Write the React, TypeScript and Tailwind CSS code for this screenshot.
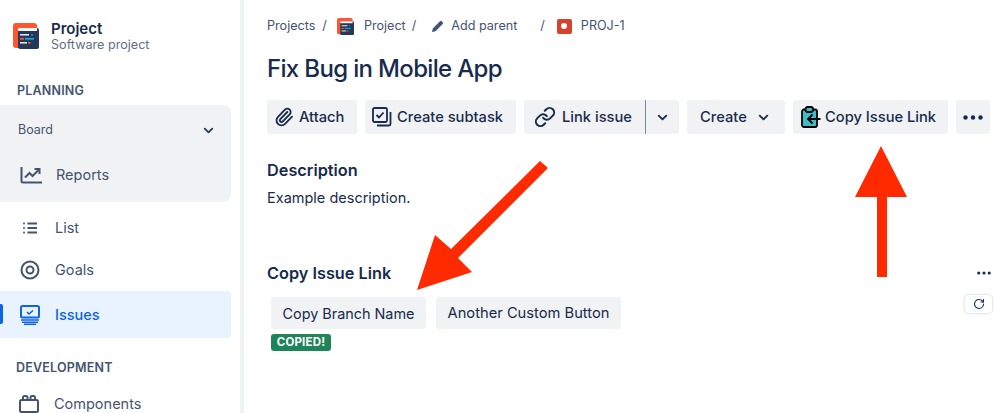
import { ReactNode } from 'react';
import { ChevronDown, Link, Paperclip, RotateCw } from 'lucide-react';

function ProjectLogo({ size }: { size: number }) {
  return (
    <svg width={size} height={size} viewBox="0 0 26 26">
      <rect x="0" y="0" width="24" height="25" rx="3" fill="#ff5630" />
      <rect x="5" y="5" width="21" height="21" rx="2" fill="#253858" />
      <rect x="5" y="5" width="19" height="3" fill="#f4f5f7" />
      <rect x="7" y="11" width="9" height="1.6" fill="#dfe1e6" />
      <rect x="18" y="11" width="2" height="1.6" fill="#2684ff" />
      <rect x="7" y="15" width="4" height="1.6" fill="#ff5630" />
      <rect x="12" y="15" width="9" height="1.6" fill="#00b8d9" />
      <rect x="7" y="19" width="7" height="1.6" fill="#dfe1e6" />
      <rect x="15" y="19" width="2.5" height="1.6" fill="#ff5630" />
    </svg>
  );
}

function TrendIcon() {
  return (
    <svg width="22" height="18" viewBox="0 0 22 18" fill="none" stroke="#44546f" strokeWidth="2">
      <path d="M1.5 1v14a1.5 1.5 0 0 0 1.5 1.5h19" />
      <path d="M5 11.5l4.5-4.5 3 3L19 3.5" />
      <path d="M14.5 3H19.5V8" />
    </svg>
  );
}

function ListIcon() {
  return (
    <svg width="14" height="12" viewBox="0 0 14 12" fill="#44546f">
      <rect x="0" y="0.5" width="2" height="2" rx="1" />
      <rect x="0" y="5" width="2" height="2" rx="1" />
      <rect x="0" y="9.5" width="2" height="2" rx="1" />
      <rect x="4.5" y="0.5" width="9.5" height="2" />
      <rect x="4.5" y="5" width="9.5" height="2" />
      <rect x="4.5" y="9.5" width="9.5" height="2" />
    </svg>
  );
}

function GoalsIcon() {
  return (
    <svg width="20" height="20" viewBox="0 0 20 20" fill="none" stroke="#44546f" strokeWidth="2">
      <circle cx="10" cy="10" r="8.5" />
      <circle cx="10" cy="10" r="3.5" />
    </svg>
  );
}

function IssuesIcon() {
  return (
    <svg width="20" height="20" viewBox="0 0 20 20" fill="none">
      <rect x="1" y="1" width="18" height="11.5" rx="1.5" stroke="#0c66e4" strokeWidth="2" />
      <path d="M7 7l2 2 4-3.5" stroke="#0c66e4" strokeWidth="1.6" />
      <path d="M1 15h18M2 17.2h16M4 19.2h12" stroke="#0c66e4" strokeWidth="1.4" />
    </svg>
  );
}

function ComponentsIcon() {
  return (
    <svg width="20" height="18" viewBox="0 0 20 18" fill="none" stroke="#44546f" strokeWidth="2">
      <rect x="1" y="5" width="18" height="12" rx="1.5" />
      <path d="M4 5V2.5A1.5 1.5 0 0 1 5.5 1H7a1.5 1.5 0 0 1 1.5 1.5V5M11.5 5V2.5A1.5 1.5 0 0 1 13 1h1.5A1.5 1.5 0 0 1 16 2.5V5" />
    </svg>
  );
}

function SubtaskIcon() {
  return (
    <svg width="20" height="20" viewBox="0 0 20 20" fill="none" stroke="#172b4d" strokeWidth="1.8">
      <rect x="1" y="1" width="14" height="14" rx="1.5" />
      <path d="M4.5 8l2.5 2.5 4.5-5" />
      <path d="M18.5 5v12a1.5 1.5 0 0 1-1.5 1.5H5" />
    </svg>
  );
}

function ClipboardIcon() {
  return (
    <svg width="20" height="22" viewBox="0 0 20 22" fill="none">
      <rect x="1" y="3.5" width="15" height="17.5" rx="2" fill="#3dbecb" stroke="#000" strokeWidth="1.8" />
      <rect x="4.5" y="1" width="7.5" height="5" rx="2" fill="#3dbecb" stroke="#000" strokeWidth="1.8" />
      <path d="M19.5 13H7.5M11.5 8.5L7 13l4.5 4.5" stroke="#000" strokeWidth="1.8" />
    </svg>
  );
}

function Dots({ big }: { big?: boolean }) {
  return (
    <svg width={big ? 20 : 14} height={big ? 5 : 4} viewBox="0 0 20 5" fill="#172b4d">
      <circle cx="2.5" cy="2.5" r="2.2" />
      <circle cx="10" cy="2.5" r="2.2" />
      <circle cx="17.5" cy="2.5" r="2.2" />
    </svg>
  );
}

function ActionButton({ children, className = '' }: { children: ReactNode; className?: string }) {
  return (
    <div className={`flex h-[34px] items-center rounded-[3px] bg-[#f1f2f4] text-[14.7px] font-medium text-[#172b4d] ${className}`}>
      {children}
    </div>
  );
}

function NavRow({ icon, label, className = '' }: { icon: ReactNode; label: string; className?: string }) {
  return (
    <div className={`flex items-center text-[14.5px] text-[#44546f] ${className}`}>
      <span className="flex w-[55px] shrink-0 items-center justify-center pl-[5px]">{icon}</span>
      <span>{label}</span>
    </div>
  );
}

export default function App() {
  return (
    <div className="relative flex h-[413px] w-[999px] overflow-hidden bg-white font-['Inter',sans-serif] text-[#172b4d]">
      {/* Sidebar */}
      <aside className="w-[244px] shrink-0 border-r-[4px] border-[#f1f2f4]">
        <div className="flex h-[73px] items-start pl-[13px] pt-[23px]">
          <ProjectLogo size={26} />
          <div className="ml-[12px] mt-[-3px]">
            <div className="text-[15px] leading-[18px] font-semibold">Project</div>
            <div className="text-[12.6px] leading-[13px] text-[#626f86]">Software project</div>
          </div>
        </div>
        <div className="pl-[17px] pt-[9px] text-[12.5px] leading-[18px] font-semibold tracking-[0.2px] text-[#44546f]">PLANNING</div>
        <div className="mt-[5px] h-[97px] w-[231px] rounded-r-[8px] bg-[#f1f2f4]">
          <div className="flex h-[50px] items-center justify-between pl-[18px] pr-[15px] pt-[1px] text-[12.5px] text-[#44546f]">
            Board
            <ChevronDown size={15} strokeWidth={3} className="text-[#2c3e5d]" />
          </div>
          <NavRow icon={<TrendIcon />} label="Reports" className="h-[40px] [&>span:first-child]:w-[56px]" />
        </div>
        <NavRow icon={<ListIcon />} label="List" className="mt-[6px] h-[40px]" />
        <NavRow icon={<GoalsIcon />} label="Goals" className="h-[43px]" />
        <div className="relative flex h-[47px] w-[231px] items-center rounded-r-[4px] bg-[#e9f2ff] text-[14.5px] font-medium text-[#0c66e4]">
          <span className="absolute left-0 top-[13px] h-[20px] w-[3px] rounded-r-[2px] bg-[#0c66e4]" />
          <span className="flex w-[55px] shrink-0 items-center justify-center pl-[5px]">
            <IssuesIcon />
          </span>
          Issues
        </div>
        <div className="pl-[16px] pt-[21px] text-[12.5px] leading-[18px] font-semibold tracking-[0.2px] text-[#44546f]">DEVELOPMENT</div>
        <div className="mt-[16px] flex items-center text-[14.5px] text-[#44546f]">
          <span className="flex w-[54px] shrink-0 items-center justify-center pl-[4px]">
            <ComponentsIcon />
          </span>
          Components
        </div>
      </aside>

      {/* Issue view */}
      <main className="min-w-0 flex-1 pl-[23px] pr-[9px]">
        <div className="mt-[16px] flex h-[20px] items-center text-[12.6px] text-[#44546f]">
          <span>Projects</span>
          <span className="ml-[7px]">/</span>
          <span className="ml-[10px]"><ProjectLogo size={17} /></span>
          <span className="ml-[10px]">Project</span>
          <span className="ml-[6px]">/</span>
          <svg width="12" height="12" viewBox="0 0 12 12" fill="#44546f" className="ml-[16px]">
            <path d="M0 12l.8-3.5L8 1.3a1.2 1.2 0 0 1 1.7 0l1 1a1.2 1.2 0 0 1 0 1.7L3.5 11.2z" />
          </svg>
          <span className="ml-[7px]">Add parent</span>
          <span className="ml-[23px]">/</span>
          <span className="ml-[12px] flex h-[15px] w-[15px] items-center justify-center rounded-[2px] bg-[#d9412f]">
            <span className="h-[6px] w-[6px] rounded-full bg-white" />
          </span>
          <span className="ml-[9px]">PROJ-1</span>
        </div>
        <h1 className="mt-[13px] text-[24px] leading-[40px] font-medium tracking-[-0.66px] text-[#172b4d]">Fix Bug in Mobile App</h1>
        <div className="mt-[11px] flex gap-[8px]">
          <ActionButton className="w-[90px] pl-[7px]">
            <Paperclip size={20} strokeWidth={2.2} className="mr-[5px]" />
            Attach
          </ActionButton>
          <ActionButton className="w-[151px] pl-[7px]">
            <SubtaskIcon />
            <span className="ml-[5px]">Create subtask</span>
          </ActionButton>
          <ActionButton className="w-[155px] pl-[10px]">
            <Link size={22} strokeWidth={2.2} />
            <span className="ml-[6px]">Link issue</span>
            <span className="ml-[13px] h-[34px] w-px bg-[#7a869a]" />
            <ChevronDown size={15} strokeWidth={3} className="ml-[9px]" />
          </ActionButton>
          <ActionButton className="w-[98px] pl-[13px]">
            Create
            <ChevronDown size={15} strokeWidth={3} className="ml-[9px]" />
          </ActionButton>
          <ActionButton className="w-[155px] pl-[8px]">
            <ClipboardIcon />
            <span className="ml-[4px]">Copy Issue Link</span>
          </ActionButton>
          <ActionButton className="w-[34px] justify-center">
            <Dots big />
          </ActionButton>
        </div>
        <h2 className="mt-[25px] text-[16.3px] leading-[22px] font-semibold">Description</h2>
        <p className="mt-[6px] text-[14.5px] leading-[22px]">Example description.</p>
        <div className="relative mt-[53px]">
          <h2 className="text-[16.3px] leading-[22px] font-semibold">Copy Issue Link</h2>
          <span className="absolute right-[-1px] top-[9px] flex">
            <Dots />
          </span>
          <div className="absolute right-[-2px] top-[33px] flex h-[18px] w-[27px] items-center justify-center rounded-[4px] bg-white shadow-[0_0_3px_rgba(9,30,66,0.25)]">
            <RotateCw size={12} strokeWidth={2.2} />
          </div>
        </div>
        <div className="ml-[4px] mt-[13px] flex gap-[10px] text-[14.4px] text-[#172b4d]">
          <div className="flex h-[32px] w-[155px] items-center justify-center rounded-[3px] bg-[#f1f2f4] pt-[1px]">Copy Branch Name</div>
          <div className="flex h-[32px] w-[185px] items-center justify-center rounded-[3px] bg-[#f1f2f4] pt-[1px] text-[14.7px]">Another Custom Button</div>
        </div>
        <div className="ml-[4px] mt-[5px] flex h-[17px] w-[60px] items-center justify-center rounded-[3px] bg-[#1f845a] text-[11.5px] font-bold tracking-[0.2px] text-white">COPIED!</div>
      </main>

      {/* Annotation arrows */}
      <svg className="absolute left-0 top-0" width="999" height="413" viewBox="0 0 999 413" fill="#ff2a00">
        <polygon points="881,146 907,197 887,197 887,277 877,277 877,197 855,197" />
        <polygon points="540,161 548,168 458,258 472,272 417,290 435,235 451,249" />
      </svg>
    </div>
  );
}
